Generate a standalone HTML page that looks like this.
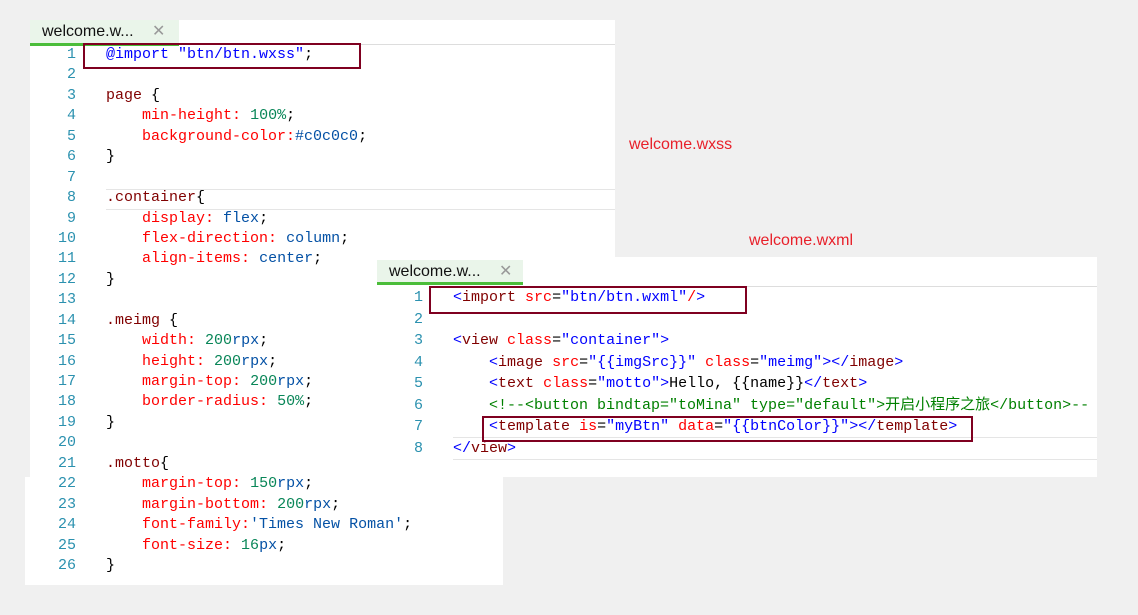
<!DOCTYPE html>
<html><head><meta charset="utf-8"><style>
body{margin:0;width:1138px;height:615px;background:#f0f0f0;position:relative;overflow:hidden;font-family:"Liberation Mono",monospace;}
.p{position:absolute;background:#fff;}
.tab{position:absolute;background:#eaf5ea;border-bottom:3px solid #4bbd3a;font-family:"Liberation Sans",sans-serif;font-size:16px;color:#111;box-sizing:border-box;padding-left:12px;}
.tab span{color:#999;margin-left:14px;}
.code{position:absolute;font-size:15px;white-space:pre;}
.ln{position:absolute;font-size:15px;color:#2b91af;text-align:right;white-space:pre;}
.s{color:#800000}.r{color:#ff0000}.b{color:#0451a5}.g{color:#098658}.k{color:#000}.bl{color:#0000ff}.gr{color:#008000}
.box{position:absolute;border:2px solid #7f0020;}
.lbl{position:absolute;font-family:"Liberation Sans",sans-serif;font-size:16px;color:#e8202a;}
</style></head><body>
<div class="p" style="left:30px;top:20px;width:585px;height:457px"></div>
<div class="p" style="left:25px;top:477px;width:478px;height:108px"></div>
<div class="tab" style="left:30px;top:20px;width:149px;height:26px;line-height:24px">welcome.w... <span>✕</span></div>
<div style="position:absolute;left:179px;top:44px;width:436px;height:1px;background:#ddd"></div>
<div style="position:absolute;left:106px;top:189px;width:509px;height:19px;border-top:1px solid #e5e5e5;border-bottom:1px solid #e5e5e5"></div>
<div class="ln" style="left:40px;top:45px;width:36px;line-height:20.44px">1
2
3
4
5
6
7
8
9
10
11
12
13
14
15
16
17
18
19
20
21
22
23
24
25
26</div>
<div class="code" style="left:106px;top:45px;line-height:20.44px"><span class="bl">@import</span> <span class="bl">"btn/btn.wxss"</span><span class="k">;</span>

<span class="s">page</span> <span class="k">{</span>
    <span class="r">min-height:</span> <span class="g">100%</span><span class="k">;</span>
    <span class="r">background-color:</span><span class="b">#c0c0c0</span><span class="k">;</span>
<span class="k">}</span>

<span class="s">.container</span><span class="k">{</span>
    <span class="r">display:</span> <span class="b">flex</span><span class="k">;</span>
    <span class="r">flex-direction:</span> <span class="b">column</span><span class="k">;</span>
    <span class="r">align-items:</span> <span class="b">center</span><span class="k">;</span>
<span class="k">}</span>

<span class="s">.meimg</span> <span class="k">{</span>
    <span class="r">width:</span> <span class="g">200</span><span class="b">rpx</span><span class="k">;</span>
    <span class="r">height:</span> <span class="g">200</span><span class="b">rpx</span><span class="k">;</span>
    <span class="r">margin-top:</span> <span class="g">200</span><span class="b">rpx</span><span class="k">;</span>
    <span class="r">border-radius:</span> <span class="g">50%</span><span class="k">;</span>
<span class="k">}</span>

<span class="s">.motto</span><span class="k">{</span>
    <span class="r">margin-top:</span> <span class="g">150</span><span class="b">rpx</span><span class="k">;</span>
    <span class="r">margin-bottom:</span> <span class="g">200</span><span class="b">rpx</span><span class="k">;</span>
    <span class="r">font-family:</span><span class="b">'Times New Roman'</span><span class="k">;</span>
    <span class="r">font-size:</span> <span class="g">16</span><span class="b">px</span><span class="k">;</span>
<span class="k">}</span></div>
<div class="box" style="left:83px;top:43px;width:274px;height:22px"></div>

<div class="lbl" style="left:629px;top:136px">welcome.wxss</div>
<div class="lbl" style="left:749px;top:232px">welcome.wxml</div>

<div class="p" style="left:377px;top:257px;width:720px;height:220px"></div>
<div class="tab" style="left:377px;top:260px;width:146px;height:25px;line-height:23px">welcome.w... <span>✕</span></div>
<div style="position:absolute;left:523px;top:286px;width:574px;height:1px;background:#ddd"></div>
<div style="position:absolute;left:453px;top:437px;width:644px;height:21px;border-top:1px solid #e5e5e5;border-bottom:1px solid #e5e5e5"></div>
<div class="ln" style="left:387px;top:287px;width:36px;line-height:21.57px">1
2
3
4
5
6
7
8</div>
<div class="code" style="left:453px;top:287px;line-height:21.57px;font-family:'Liberation Mono','Noto Sans CJK SC',monospace"><span class="bl">&lt;</span><span class="s">import</span> <span class="r">src</span>=<span class="bl">"btn/btn.wxml"</span><span class="r">/</span><span class="bl">&gt;</span>

<span class="bl">&lt;</span><span class="s">view</span> <span class="r">class</span>=<span class="bl">"container"</span><span class="bl">&gt;</span>
    <span class="bl">&lt;</span><span class="s">image</span> <span class="r">src</span>=<span class="bl">"{{imgSrc}}"</span> <span class="r">class</span>=<span class="bl">"meimg"</span><span class="bl">&gt;&lt;/</span><span class="s">image</span><span class="bl">&gt;</span>
    <span class="bl">&lt;</span><span class="s">text</span> <span class="r">class</span>=<span class="bl">"motto"</span><span class="bl">&gt;</span>Hello, {{name}}<span class="bl">&lt;/</span><span class="s">text</span><span class="bl">&gt;</span>
    <span class="gr">&lt;!--&lt;button bindtap="toMina" type="default"&gt;开启小程序之旅&lt;/button&gt;--</span>
    <span class="bl">&lt;</span><span class="s">template</span> <span class="r">is</span>=<span class="bl">"myBtn"</span> <span class="r">data</span>=<span class="bl">"{{btnColor}}"</span><span class="bl">&gt;&lt;/</span><span class="s">template</span><span class="bl">&gt;</span>
<span class="bl">&lt;/</span><span class="s">view</span><span class="bl">&gt;</span></div>
<div class="box" style="left:429px;top:286px;width:314px;height:24px"></div>
<div class="box" style="left:482px;top:416px;width:487px;height:22px"></div>
</body></html>
